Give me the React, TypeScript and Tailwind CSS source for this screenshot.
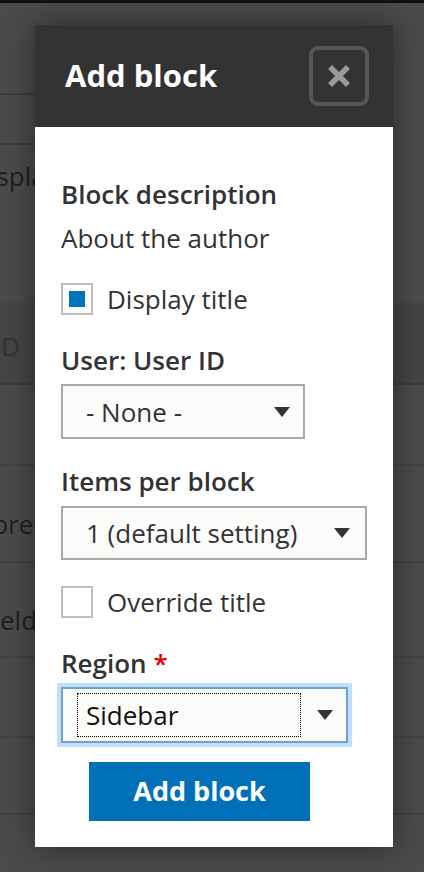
import React from "react";

const font = { fontFamily: '"Open Sans", "Noto Sans", sans-serif' };

function Arrow() {
  return (
    <svg width="16" height="10" viewBox="0 0 16 10" className="shrink-0">
      <path d="M0 0 L16 0 L8 10 Z" fill="#333" />
    </svg>
  );
}

export default function App() {
  return (
    <div className="relative h-[872px] w-[424px] overflow-hidden bg-[#4b4b4b]" style={font}>
      {/* background page */}
      <div className="flex flex-col">
        <div className="h-[3px] bg-[#111]" />
        <div className="h-[92px] border-b-2 border-[#3c3c3c] w-[40px]" />
        <div className="h-[50px] border-b-2 border-[#3c3c3c] w-[40px]" />
        <div className="h-[160px] flex items-start pt-[16px] text-[26px] text-[#1f1f1f] leading-[30px]">
          <span className="-ml-[29px]">Display</span>
        </div>
        <div className="h-[82px] bg-[#454545] border-b-2 border-[#3d3d3d] flex items-center pt-[6px] text-[26px] text-[#333] -mt-[2px]">
          <span className="ml-[1px]">D</span>
        </div>
        <div className="h-[81px] border-b-2 border-[#424242]" />
        <div className="h-[97px] border-b-2 border-[#424242] flex items-start pt-[43px] text-[26px] leading-[30px] text-[#1f1f1f]">
          <span className="-ml-[28px]">Libre</span>
        </div>
        <div className="h-[95px] border-b-2 border-[#424242] flex items-start pt-[42px] text-[26px] leading-[30px] text-[#1f1f1f]">
          <span className="-ml-[20px]">Field:</span>
        </div>
        <div className="h-[80px] border-b-2 border-[#424242]" />
        <div className="h-[77px] border-b-2 border-[#424242]" />
      </div>

      {/* modal */}
      <div className="absolute left-[35px] top-[25px] w-[358px] shadow-[0_0_30px_rgba(0,0,0,0.45)]">
        <div className="flex h-[102px] items-center justify-between bg-[#333333] pl-[30px] pr-[24px]">
          <h1 className="text-[31px] font-bold leading-none text-white pb-[2px]">Add block</h1>
          <div className="flex h-[60px] w-[60px] items-center justify-center rounded-[9px] border-[4px] border-[#555555]">
            <svg width="26" height="26" viewBox="0 0 26 26">
              <path d="M4 4 L22 22 M22 4 L4 22" stroke="#9a9a9a" strokeWidth="5.5" strokeLinecap="butt" />
            </svg>
          </div>
        </div>
        <div className="flex flex-col bg-white pl-[26px] pb-[26px] text-[#333]">
          <div className="mt-[52px] text-[26px] font-semibold leading-[30px]">Block description</div>
          <div className="mt-[14px] text-[26px] leading-[30px]">About the author</div>
          <div className="mt-[30px] flex items-center gap-[14px]">
            <div className="flex h-[32px] w-[32px] items-center justify-center border-2 border-[#bdbdbd]">
              <div className="h-[16px] w-[16px] bg-[#0074bd]" />
            </div>
            <span className="text-[26px] leading-[30px]">Display title</span>
          </div>
          <div className="mt-[30px] text-[26px] font-semibold leading-[30px]">User: User ID</div>
          <div className="mt-[9px] flex h-[55px] w-[244px] items-center justify-between border-2 border-[#a8a8a8] bg-[#fcfcfa] pl-[23px] pr-[13px]">
            <span className="text-[26px] leading-[30px]">- None -</span>
            <Arrow />
          </div>
          <div className="mt-[27px] text-[26px] font-semibold leading-[30px]">Items per block</div>
          <div className="mt-[10px] flex h-[54px] w-[306px] items-center justify-between border-2 border-[#a8a8a8] bg-[#fcfcfa] pl-[23px] pr-[15px]">
            <span className="text-[26px] leading-[30px]">1 (default setting)</span>
            <Arrow />
          </div>
          <div className="mt-[26px] flex items-center gap-[14px]">
            <div className="h-[32px] w-[32px] border-2 border-[#bdbdbd]" />
            <span className="text-[26px] leading-[30px]">Override title</span>
          </div>
          <div className="mt-[30px] text-[26px] font-semibold leading-[30px]">
            Region <span className="text-[#e00000]">*</span>
          </div>
          <div className="mt-[9px] flex h-[56px] w-[287px] items-center justify-between border-2 border-[#6aa3d4] bg-[#fcfcfa] pl-[14px] pr-[13px] shadow-[0_0_0_4px_#bfdffb]">
            <div className="flex h-[44px] w-[224px] items-center border border-dotted border-black pl-[8px]">
              <span className="text-[26px] leading-[30px] text-[#111]">Sidebar</span>
            </div>
            <Arrow />
          </div>
          <button className="ml-[28px] mt-[19px] flex h-[59px] w-[221px] items-center justify-center bg-[#0071b8] text-[27px] font-bold text-white">
            Add block
          </button>
        </div>
      </div>
    </div>
  );
}
